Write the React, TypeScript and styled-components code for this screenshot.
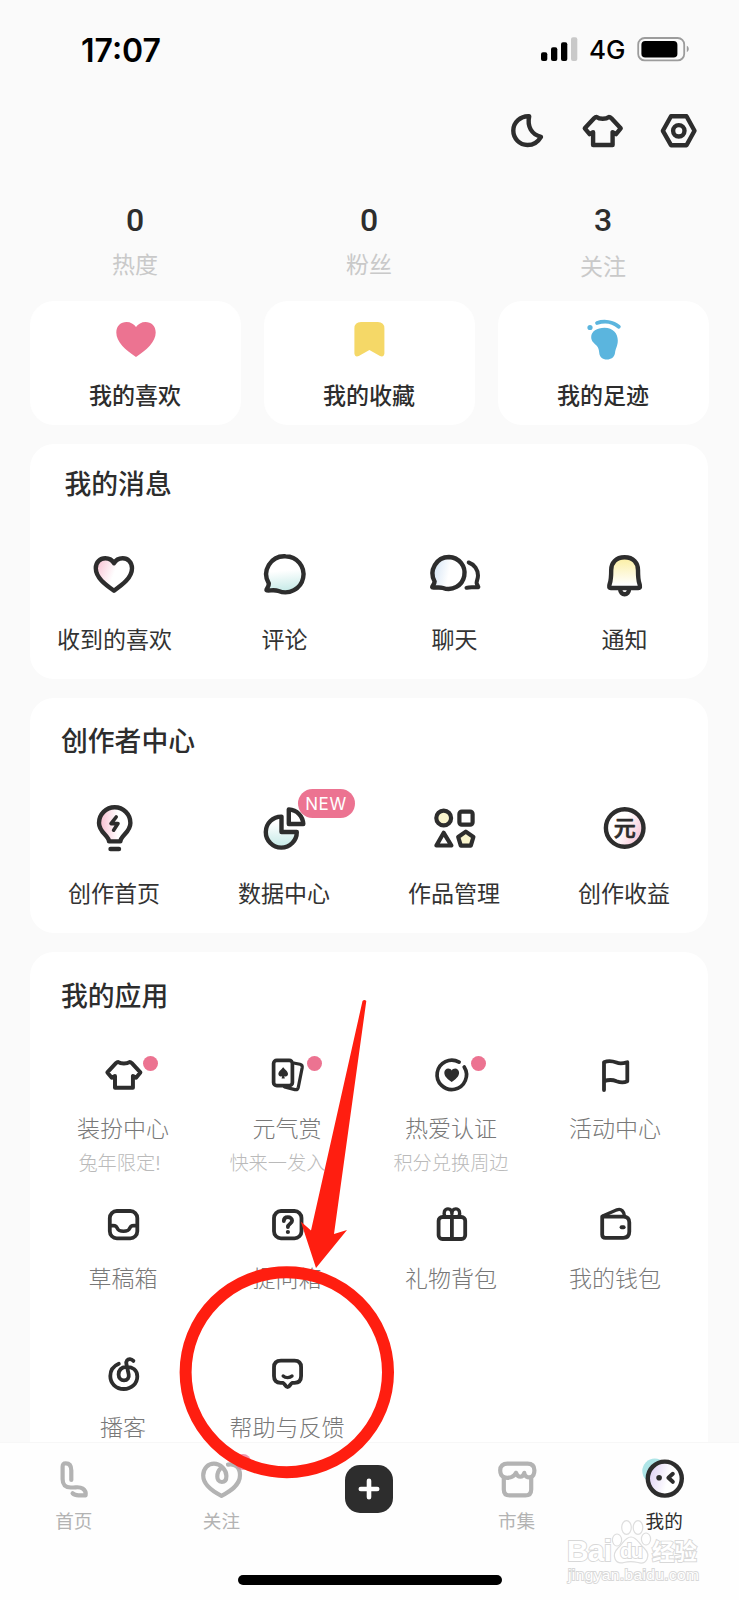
import React from 'react';
import styled, { createGlobalStyle } from 'styled-components';

const INK = '#2d2d2d';
const PINK = '#ec7391';
const MUTED = '#b3b3b3';

const GlobalStyle = createGlobalStyle`
  *, *::before, *::after { box-sizing: border-box; }
  body {
    margin: 0;
    background: #fafafa;
    font-family: Inter, "Noto Sans CJK SC", sans-serif;
    color: ${INK};
  }
  svg { display: block; overflow: visible; flex: none; }
`;

const Screen = styled.div`
  position: relative;
  width: 739px;
  height: 1600px;
  display: flex;
  flex-direction: column;
  overflow: hidden;
  background: #fafafa;
`;

const Content = styled.main`
  flex: 1;
  min-height: 0;
  overflow: hidden;
  display: flex;
  flex-direction: column;
`;

const StatusBar = styled.header`
  height: 98px;
  flex: none;
  padding: 0 50px 0 81px;
  display: flex;
  align-items: center;
  justify-content: space-between;
`;

const Clock = styled.span`
  margin-top: 3px;
  font-size: 32px;
  font-weight: 600;
  letter-spacing: 0;
  line-height: 40px;
  color: #000;
`;

const StatusIcons = styled.div`
  display: flex;
  align-items: center;
`;

const Network = styled.span`
  margin: 2px 13px 0 11px;
  width: 35px;
  font-size: 26px;
  font-weight: 500;
  line-height: 30px;
  color: #000;
`;

const Toolbar = styled.div`
  height: 57px;
  flex: none;
  padding: 9px 37px 0 0;
  display: flex;
  justify-content: flex-end;
  gap: 28px;
`;

const Stats = styled.section`
  display: grid;
  grid-template-columns: repeat(3, 211px);
  column-gap: 23px;
  height: 146px;
  flex: none;
  padding: 47px 0 0 29.5px;
`;

const Stat = styled.div`
  display: flex;
  flex-direction: column;
  align-items: center;
`;

const StatValue = styled.strong`
  font-family: Roboto, sans-serif;
  font-size: 32px;
  font-weight: 500;
  line-height: 36px;
`;

const StatLabel = styled.span<{ $drop?: number }>`
  margin-top: ${p => 12 + (p.$drop ?? 0)}px;
  font-size: 23px;
  line-height: 30px;
  color: #c9c9c9;
`;

const Shortcuts = styled.section`
  display: grid;
  grid-template-columns: repeat(3, 211px);
  column-gap: 23px;
  padding-left: 30px;
  flex: none;
`;

const Shortcut = styled.div`
  height: 124px;
  padding: 14px 1px 0 0;
  border-radius: 24px;
  background: #fff;
  display: flex;
  flex-direction: column;
  align-items: center;
`;

const ShortcutLabel = styled.span`
  margin-top: 17px;
  font-size: 23px;
  font-weight: 500;
  line-height: 32px;
`;

const Panel = styled.section<{ $height: number }>`
  margin: 19px 30px 0;
  width: 678px;
  height: ${p => p.$height}px;
  flex: none;
  border-radius: 24px;
  background: #fff;
`;

const PanelTitle = styled.h2<{ $indent: number; $top: number }>`
  margin: 0;
  padding: ${p => p.$top}px 0 0 ${p => p.$indent}px;
  font-size: 26.8px;
  font-weight: 500;
  line-height: 38px;
`;

const FourUp = styled.div<{ $top: number }>`
  display: grid;
  grid-template-columns: repeat(4, 170px);
  margin: ${p => p.$top}px 0 0 -1px;
`;

const Entry = styled.div`
  display: flex;
  flex-direction: column;
  align-items: center;
`;

const EntryLabel = styled.span<{ $gap: number; $shift?: number }>`
  margin-top: ${p => p.$gap}px;
  padding-left: ${p => p.$shift ?? 0}px;
  font-size: 23px;
  line-height: 32px;
  white-space: nowrap;
  color: #333;
`;

const IconSlot = styled.div`
  position: relative;
`;

const NewBadge = styled.span`
  position: absolute;
  left: 37.5px;
  top: -15px;
  width: 57px;
  height: 29px;
  border-radius: 15px;
  background: ${PINK};
  color: #fff;
  font-size: 17px;
  letter-spacing: 0.6px;
  line-height: 30px;
  text-align: center;
`;

const AppGrid = styled.div`
  display: grid;
  grid-template-columns: repeat(4, 164px);
  grid-auto-rows: 149.5px;
  margin: 40px 0 0 11px;
`;

const AppLabel = styled.span`
  margin-top: 18px;
  font-size: 23px;
  font-weight: 300;
  line-height: 32px;
  color: #787878;
  white-space: nowrap;
`;

const AppNote = styled.span<{ $trail?: number }>`
  margin-top: 4px;
  padding-right: ${p => p.$trail ?? 0}px;
  font-size: 19.2px;
  font-weight: 300;
  line-height: 28px;
  color: #bababa;
  white-space: nowrap;
`;

const Dot = styled.i`
  position: absolute;
  left: 40px;
  top: 1px;
  width: 15px;
  height: 15px;
  border-radius: 50%;
  background: ${PINK};
`;

const TabBar = styled.nav`
  height: 158px;
  flex: none;
  background: #fefefe;
  border-top: 1px solid #f7f7f7;
  display: flex;
  flex-direction: column;
  justify-content: space-between;
  align-items: center;
  padding: 12px 0 15px;
`;

const Tabs = styled.div`
  display: grid;
  grid-template-columns: repeat(5, 1fr);
  width: 100%;
  padding-right: 1px;
`;

const Tab = styled.div<{ $active?: boolean }>`
  display: flex;
  flex-direction: column;
  align-items: center;
  font-size: 18.6px;
  line-height: 26px;
  color: ${p => (p.$active ? INK : MUTED)};
`;

const TabLabel = styled.span`
  margin-top: 5px;
`;

const Plus = styled.div`
  width: 48px;
  height: 48px;
  margin-top: 10px;
  border-radius: 15px;
  background: ${INK};
`;

const FollowDot = styled(Dot)`
  left: 38px;
  top: -1px;
  width: 16px;
  height: 16px;
  opacity: 0.75;
`;

const HomeIndicator = styled.div`
  width: 264px;
  height: 10px;
  border-radius: 5px;
  background: #000;
`;

const Annotation = styled.svg`
  position: absolute;
  left: 0;
  top: 0;
  pointer-events: none;
`;

type IconProps = { size?: number; sw?: number; color?: string; children: React.ReactNode };

const Icon = ({ size = 48, sw = 4.4, color = INK, children }: IconProps) => (
  <svg
    width={size}
    height={size}
    viewBox={`0 0 ${size} ${size}`}
    fill="none"
    stroke={color}
    strokeWidth={sw}
    strokeLinecap="round"
    strokeLinejoin="round"
  >
    {children}
  </svg>
);

type FadeProps = { id: string; from: string; x1?: string; y1?: string; x2?: string; y2?: string; end?: string };

const Fade = ({ id, from, x1 = '0', y1 = '0', x2 = '1', y2 = '0', end = '60%' }: FadeProps) => (
  <defs>
    <linearGradient id={id} x1={x1} y1={y1} x2={x2} y2={y2}>
      <stop offset="0" stopColor={from} />
      <stop offset={end} stopColor="#fff" />
    </linearGradient>
  </defs>
);

const SHIRT = 'M18.6 10 C21.5 12.3 28 12.3 30.9 10 C32 10 32.6 10.4 33.4 11.2 L42.7 21.3 L38 27.2 L34.6 25.2 V38 H15.1 V25.2 L11.6 27.2 L6.8 21.3 L16.1 11.2 C16.9 10.4 17.5 10 18.6 10Z';

const Moon = () => (
  <Icon><path d="M27.2 9.3 C25 19.5 29.5 27.5 39 29.8 C36 35 31.5 38 25.5 38 C17.5 38 11.3 31.5 11.3 23.6 C11.3 15.5 18.5 8.8 27.2 9.3Z" /></Icon>
);
const Shirt = () => <Icon><path d={SHIRT} /></Icon>;
const Settings = () => (
  <Icon>
    <path d="M17 9.3 H32.5 L40.5 23.8 L32.5 38.2 H17 L8.9 23.8Z" />
    <circle cx="24.8" cy="23.8" r="5.7" />
  </Icon>
);

const HeartSolid = () => (
  <Icon><path stroke="none" fill={PINK} d="M25 42 C14.5 35 5.3 27 5.3 17.5 C5.3 11 9.8 7 15.5 7 C19.5 7 23 9 25 12 C27 9 30.5 7 34.5 7 C40.2 7 44.7 11 44.7 17.5 C44.7 27 35.5 35 25 42Z" /></Icon>
);
const BookmarkSolid = () => (
  <Icon><path stroke="none" fill="#f5d867" d="M16 7 H32.8 Q39.4 7 39.4 13.5 V38.5 Q38.8 42.5 35 41 L24.4 35 L13.8 41 Q10 42.5 9.4 38.5 V13.5 Q9.4 7 16 7Z" /></Icon>
);
const Foot = () => (
  <Icon color="#5bb5de" sw={3.8}>
    <path stroke="none" fill="#5bb5de" d="M25.5 12.8 C34 12.8 38.8 18.5 38.8 25.5 C38.8 31 36.6 33 36 38 C35.4 42.4 32 44.5 28 44.5 C23.4 44.5 20.6 42.2 20.2 37.5 C19.9 34.5 19.4 32.5 17.5 30.5 C14.5 27.6 12.2 26 12.2 22 C12.2 16.5 18 12.8 25.5 12.8Z" />
    <path d="M18 8 C25.5 5.5 34 6.8 39.8 11.8" />
    <circle cx="11" cy="12.5" r="2.6" stroke="none" fill="#5bb5de" />
  </Icon>
);

const HeartLine = () => (
  <Icon>
    <Fade id="pinkFade" from="#f8bccf" y2="0.35" />
    <path fill="url(#pinkFade)" d="M24 39.7 C16 34 5.8 27 5.8 17.3 C5.8 11 10.3 7.3 15.3 7.3 C19.3 7.3 22.5 9.5 24 12.3 C25.5 9.5 28.7 7.3 32.7 7.3 C37.7 7.3 42 11 42 17.3 C42 27 32 34 24 39.7Z" />
  </Icon>
);
const Comment = () => (
  <Icon>
    <Fade id="tealFade" from="#c3e9e6" x1="0.5" y1="1" x2="0.4" y2="0" />
    <path fill="url(#tealFade)" d="M25.5 5.3 A18.2 18 0 1 1 18.5 40 C14 38.3 10.5 39.8 7 39.4 C5.2 38.9 9 36.5 8.8 32.5 A18.2 18 0 0 1 25.5 5.3Z" />
  </Icon>
);
const Chat = () => (
  <Icon>
    <Fade id="blueFade" from="#cfe1f3" y2="0.2" />
    <path fill="url(#blueFade)" d="M19 6 A16 16 0 1 1 13 37 C9.5 35.8 6 37 2.6 36.4 C1.2 35.8 4.6 33.5 4.6 30.5 A16.5 16.5 0 0 1 19 6Z" />
    <path strokeWidth="4" d="M38.7 11.5 C44.5 13.5 48 19 48 24.5 C48 28 46.6 29.5 46.6 32 C46.8 34 49 35.3 48.2 36.3 C44.5 36.5 40 35.6 36.5 36.8" />
  </Icon>
);
const Bell = () => (
  <Icon>
    <Fade id="yellowFade" from="#fbeea0" x2="0" y2="1" end="90%" />
    <path d="M20.3 39 a4.3 4.3 0 0 0 8.6 0" />
    <path fill="url(#yellowFade)" d="M24.6 6.3 C15.8 6.3 11.2 12 11.2 19 C11.2 26 11.2 28.5 9.8 32.5 C8.8 35.6 9 37 11 37 H38.2 C40.2 37 40.4 35.6 39.4 32.5 C38 28.5 38 26 38 19 C38 12 33.4 6.3 24.6 6.3Z" />
  </Icon>
);

const Bulb = () => (
  <Icon>
    <Fade id="bulbFade" from="#f6b9cd" />
    <path fill="url(#bulbFade)" d="M19 37.4 C18.8 31.5 9 28.5 9 19 A15.7 15.7 0 0 1 40.4 19 C40.4 28.5 30.6 31.5 30.4 37.4Z" />
    <path strokeWidth="3.6" d="M26.2 13 L21 19.6 H28 L23.6 26.2" />
    <path d="M20.5 45 H29" />
  </Icon>
);
const Pie = () => (
  <Icon>
    <Fade id="pieFade" from="#c3e9e6" x1="0.5" y1="1" x2="0.5" y2="0" end="80%" />
    <path fill="url(#pieFade)" d="M21.5 12.6 V28 H36.8 A15.5 15.5 0 1 1 21.5 12.6Z" />
    <path d="M28.8 5.4 V20 H43.3 C42.8 12 37 6 28.8 5.4Z" />
  </Icon>
);
const Shapes = () => (
  <Icon sw={4.2}>
    <circle cx="13.7" cy="14" r="7.4" fill="#faf5cd" />
    <rect x="29.4" y="7.6" width="13.2" height="13" rx="2.4" />
    <path d="M13.7 28.8 L21.4 41.5 H6.4Z" />
    <path fill="#faf5cd" d="M35.8 27.6 L43.4 33 L40.8 41.6 H30.8 L28.2 33Z" />
  </Icon>
);
const YuanText = styled.text`
  font-family: "Noto Sans CJK SC", sans-serif;
  font-size: 22px;
  font-weight: 500;
  text-anchor: middle;
`;
const Yuan = () => (
  <Icon>
    <Fade id="yuanFade" from="#f6bccf" x1="1" y1="0.8" x2="0" y2="0.3" />
    <circle cx="24.7" cy="24" r="18.8" fill="url(#yuanFade)" />
    <YuanText x="24.7" y="32.3" fill={INK} stroke={INK} strokeWidth="0.7">元</YuanText>
  </Icon>
);

const AppShirt = () => (
  <Icon size={40} sw={4}><path strokeWidth="4.3" transform="translate(-1.9 -2.2) scale(0.92)" d={SHIRT} /></Icon>
);
const Cards = () => (
  <Icon size={40} sw={3.7}>
    <rect x="6.6" y="5.4" width="18.8" height="25.3" rx="3.2" />
    <path strokeWidth="3.2" d="M27.8 8.2 L33 9.3 Q35.6 10 35.2 12.6 L31.3 32.3 Q30.7 35 28 34.6 L17.5 32" />
    <path stroke="none" fill={INK} d="M16.2 12.2 C18 14.5 21 16.3 21 19 C21 21.3 18.6 22 17.2 20.9 L17.8 23.6 H14.6 L15.2 20.9 C13.8 22 11.4 21.3 11.4 19 C11.4 16.3 14.4 14.5 16.2 12.2Z" />
  </Icon>
);
const Passion = () => (
  <Icon size={40} sw={3.7}>
    <path d="M33.2 12 A14.7 14.7 0 1 1 28.1 7.1" />
    <path stroke="none" fill={INK} d="M20.7 27 C17 24.5 13.3 21.5 13.3 17.8 C13.3 15.2 15.2 13.6 17.2 13.6 C18.8 13.6 20 14.3 20.7 15.4 C21.4 14.3 22.6 13.6 24.2 13.6 C26.2 13.6 28.1 15.2 28.1 17.8 C28.1 21.5 24.4 24.5 20.7 27Z" />
  </Icon>
);
const Flag = () => (
  <Icon size={40}>
    <path strokeWidth="3.8" d="M9 35 V7.3 C13.5 5.3 18 6.2 21.5 7.6 C25.5 9.2 28.5 8.3 32.3 7.3 V26.3 C28.5 28 25 27.5 21.5 26.2 C17.5 24.6 13.5 24.5 9 26.3" />
  </Icon>
);
const Drafts = () => (
  <Icon size={40} sw={3.8}>
    <rect x="6.8" y="6" width="27.5" height="27.3" rx="7" />
    <path strokeWidth="3.6" d="M7 20.8 C11.5 20.3 12.8 20.6 14.3 23.2 C15.4 25.6 16.5 26.2 20.5 26.2 C24.5 26.2 25.6 25.6 26.7 23.2 C28.2 20.6 29.5 20.3 34 20.8" />
  </Icon>
);
const Question = () => (
  <Icon size={40} sw={3.8}>
    <rect x="7" y="6" width="27.5" height="27.3" rx="7" />
    <path d="M16.8 16 C16.8 13.2 18.6 12.2 20.9 12.2 C23.3 12.2 25.1 13.5 25.1 15.8 C25.1 18.8 20.9 18.8 20.9 22" />
    <circle cx="20.9" cy="27" r="2.1" stroke="none" fill={INK} />
  </Icon>
);
const Gift = () => (
  <Icon size={40} sw={3.8}>
    <rect x="7.6" y="12" width="26.6" height="22" rx="3.8" />
    <path d="M20.9 12 V34" />
    <path strokeWidth="3.4" d="M14 11.5 C12 8 13.5 3.9 17 3.9 C19.8 3.9 20.9 6 20.9 9 C20.9 6 22 3.9 24.8 3.9 C28.3 3.9 29.8 8 27.8 11.5" />
  </Icon>
);
const Wallet = () => (
  <Icon size={40} sw={3.8}>
    <path d="M7.2 11.6 H28.3 Q34.3 11.6 34.3 17.6 V26.5 Q34.3 32.8 28.3 32.8 H10.3 Q7.2 32.8 7.2 29.8Z" />
    <path strokeWidth="3.4" d="M7.6 11 L22 4.8 C26.3 3.2 29.3 6.5 29.6 11.5" />
    <path strokeWidth="4" d="M26.6 22.3 H28.6" />
  </Icon>
);
const Podcast = () => (
  <Icon size={40} sw={3.8}>
    <path d="M15.8 9.7 C10.5 12 7.3 16.5 7.3 22 C7.3 29.5 13 35 20.8 35 C28.5 35 34.3 29.5 34.3 22.5 C34.3 16 29.5 12.6 23.5 12.8 C18 13.2 15.6 16.5 15.6 20.5 C15.6 24 18 26.3 21 26.3 C24.5 26.3 26.3 23.5 25.7 20.5 L23.4 10 C22.8 7 24.5 5 27 5.2 C28.5 5.3 29.5 6 30.4 6.9" />
  </Icon>
);
const Feedback = () => (
  <Icon size={40} sw={3.8}>
    <path d="M14 6.7 H27.5 Q34.1 6.7 34.1 13.3 V22 Q34.1 28.8 27.5 28.8 H25.3 C23.6 29.2 22.6 33.2 20.6 33.2 C18.6 33.2 17.6 29.2 15.9 28.8 H13.7 Q7 28.8 7 22 V13.3 Q7 6.7 14 6.7Z" />
    <path strokeWidth="3.4" d="M16.2 22 C18.5 24.2 22.8 24.2 25 22" />
  </Icon>
);

const HomeIcon = () => (
  <Icon color={MUTED} sw={4.2}>
    <path d="M21.3 25 V15.5 C21.3 10.5 19 8.3 15.8 8.3 C13.3 8.3 12.6 9.5 12.6 12 V24 C12.6 30.2 15.2 32.3 20.8 32.5 C26 32.7 29.3 31.2 32.6 33.4 C35.7 35.5 36.2 37.4 35.6 40.4 H28.6 C26 40.4 24 39.8 22.6 38.3" />
  </Icon>
);
const FollowIcon = () => (
  <Icon color={MUTED} sw={4.2}>
    <path d="M31 9.6 C38 8.2 43 12.5 43 20 C43 30.5 33 36.5 24.5 40.8 C16 36.5 6.2 30.5 6.2 20.5 C6.2 12.8 11.5 8.6 17 8.6 C23.5 8.6 29.4 15 29.4 21 C29.4 25 27.5 27 24.8 27 C21.7 27 20.3 24.5 20.3 21.5 C20.3 18 21.8 15 24 13" />
  </Icon>
);
const MarketIcon = () => (
  <Icon color={MUTED} sw={4.2}>
    <path d="M10.8 22.2 C8 20.8 7.2 17.8 7.2 15.3 C7.2 10.8 9.9 8.6 14.5 8.6 H34.4 C39 8.6 41.4 10.8 41.4 15.3 C41.4 17.8 40.8 20.8 38.2 22.2 C34 23 31.5 20.8 31.3 17.8 C29.8 22.8 25 23.3 23 17.8 C21.5 21.8 16 23.8 10.8 22.2Z" />
    <path d="M10.8 22 V34.4 Q10.8 40.4 16.8 40.4 H32.2 Q38.2 40.4 38.2 34.4 V22" />
  </Icon>
);
const MeIcon = () => (
  <Icon>
    <Fade id="meFade" from="#d9c8f3" y2="0.3" end="70%" />
    <circle cx="14.8" cy="16" r="12.5" fill="#aee5e7" stroke="none" />
    <circle cx="24.8" cy="23.6" r="17" fill="url(#meFade)" />
    <circle cx="19.1" cy="22.8" r="2.8" fill={INK} stroke="none" />
    <path strokeWidth="4" d="M32.8 18.8 L28.4 22.8 L32.8 26.8" />
  </Icon>
);

const shortcuts = [
  { label: '我的喜欢', icon: <HeartSolid /> },
  { label: '我的收藏', icon: <BookmarkSolid /> },
  { label: '我的足迹', icon: <Foot /> },
];

const messages = [
  { label: '收到的喜欢', icon: <HeartLine /> },
  { label: '评论', icon: <Comment /> },
  { label: '聊天', icon: <Chat /> },
  { label: '通知', icon: <Bell /> },
];

const creator = [
  { label: '创作首页', icon: <Bulb /> },
  { label: '数据中心', icon: <Pie />, isNew: true },
  { label: '作品管理', icon: <Shapes /> },
  { label: '创作收益', icon: <Yuan /> },
];

const apps = [
  { label: '装扮中心', icon: <AppShirt />, note: '兔年限定!', trail: 7, dot: true },
  { label: '元气赏', icon: <Cards />, note: '快来一发入...', trail: 3, dot: true },
  { label: '热爱认证', icon: <Passion />, note: '积分兑换周边', dot: true },
  { label: '活动中心', icon: <Flag /> },
  { label: '草稿箱', icon: <Drafts /> },
  { label: '提问箱', icon: <Question /> },
  { label: '礼物背包', icon: <Gift /> },
  { label: '我的钱包', icon: <Wallet /> },
  { label: '播客', icon: <Podcast /> },
  { label: '帮助与反馈', icon: <Feedback /> },
];

const Watermark = styled.div`
  position: absolute;
  left: 566px;
  top: 1519px;
  width: 136px;
  height: 66px;
`;

const MarkText = styled.text<{ $size: number; $weight: number }>`
  font-family: "Liberation Sans", "Noto Sans CJK SC", sans-serif;
  font-size: ${p => p.$size}px;
  font-weight: ${p => p.$weight};
  fill: #fff;
  stroke: #d8d8d8;
  stroke-width: 1.8px;
  paint-order: stroke;
`;

const BaiduMark = () => (
  <Watermark>
    <svg width="136" height="66" viewBox="0 0 136 66">
      <MarkText $size={30} $weight={700} x="1" y="42" textLength="45">Bai</MarkText>
      <g fill="#fff" stroke="#dedede" strokeWidth="1.2">
        <ellipse cx="51" cy="21" rx="4.6" ry="6" />
        <ellipse cx="60.5" cy="8.5" rx="4.8" ry="6.8" />
        <ellipse cx="72" cy="8.5" rx="4.8" ry="6.8" />
        <ellipse cx="80" cy="20" rx="4.6" ry="6" />
        <path d="M65 18 C71 18 73 25 78 29 C86 37 80 46 72 43.5 C67 42.5 62 42.5 58 43.5 C49 46 45 36 52 29 C57 25 59 18 65 18Z" />
      </g>
      <MarkText $size={20} $weight={700} x="54" y="39" textLength="23">du</MarkText>
      <MarkText $size={22.5} $weight={700} x="86" y="41">经验</MarkText>
      <MarkText $size={15.5} $weight={400} x="2" y="61" textLength="131">jingyan.baidu.com</MarkText>
    </svg>
  </Watermark>
);

export default function App() {
  return (
    <>
      <GlobalStyle />
      <Screen>
        <Content>
          <StatusBar>
            <Clock>17:07</Clock>
            <StatusIcons>
              <svg width="37" height="24" viewBox="0 0 37 24">
                <rect x="0" y="15.2" width="6.3" height="8.8" rx="2" />
                <rect x="10" y="10.2" width="6.3" height="13.8" rx="2" />
                <rect x="20" y="5.2" width="6.3" height="18.8" rx="2" />
                <rect x="30" y="0.2" width="6.3" height="23.8" rx="2" fill="#c9c9c9" />
              </svg>
              <Network>4G</Network>
              <svg width="52" height="24" viewBox="0 0 52 24">
                <rect x="1.2" y="1" width="46" height="22.4" rx="6.5" fill="none" stroke="#9c9c9c" strokeWidth="1.8" />
                <rect x="4.4" y="4" width="36" height="16.6" rx="3.8" />
                <path d="M49.8 8.8 C52.4 10 52.4 14 49.8 15.2Z" fill="#9c9c9c" />
              </svg>
            </StatusIcons>
          </StatusBar>

          <Toolbar>
            <Moon />
            <Shirt />
            <Settings />
          </Toolbar>

          <Stats>
            <Stat><StatValue>0</StatValue><StatLabel>热度</StatLabel></Stat>
            <Stat><StatValue>0</StatValue><StatLabel>粉丝</StatLabel></Stat>
            <Stat><StatValue>3</StatValue><StatLabel $drop={2}>关注</StatLabel></Stat>
          </Stats>

          <Shortcuts>
            {shortcuts.map(s => (
              <Shortcut key={s.label}>
                {s.icon}
                <ShortcutLabel>{s.label}</ShortcutLabel>
              </Shortcut>
            ))}
          </Shortcuts>

          <Panel $height={235}>
            <PanelTitle $indent={34.5} $top={21}>我的消息</PanelTitle>
            <FourUp $top={48}>
              {messages.map(m => (
                <Entry key={m.label}>
                  {m.icon}
                  <EntryLabel $gap={25} $shift={1}>{m.label}</EntryLabel>
                </Entry>
              ))}
            </FourUp>
          </Panel>

          <Panel $height={235}>
            <PanelTitle $indent={31} $top={24}>创作者中心</PanelTitle>
            <FourUp $top={44}>
              {creator.map(c => (
                <Entry key={c.label}>
                  <IconSlot>
                    {c.icon}
                    {c.isNew && <NewBadge>NEW</NewBadge>}
                  </IconSlot>
                  <EntryLabel $gap={26}>{c.label}</EntryLabel>
                </Entry>
              ))}
            </FourUp>
          </Panel>

          <Panel $height={530}>
            <PanelTitle $indent={31} $top={25}>我的应用</PanelTitle>
            <AppGrid>
              {apps.map(a => (
                <Entry key={a.label}>
                  <IconSlot>
                    {a.icon}
                    {a.dot && <Dot />}
                  </IconSlot>
                  <AppLabel>{a.label}</AppLabel>
                  {a.note && <AppNote $trail={a.trail}>{a.note}</AppNote>}
                </Entry>
              ))}
            </AppGrid>
          </Panel>
        </Content>

        <TabBar>
          <Tabs>
            <Tab><HomeIcon /><TabLabel>首页</TabLabel></Tab>
            <Tab>
              <IconSlot><FollowIcon /><FollowDot /></IconSlot>
              <TabLabel>关注</TabLabel>
            </Tab>
            <Tab>
              <Plus>
                <Icon color="#fff" sw={4.6}><path d="M24 15.8 V32.2 M15.8 24 H32.2" /></Icon>
              </Plus>
            </Tab>
            <Tab><MarketIcon /><TabLabel>市集</TabLabel></Tab>
            <Tab $active><MeIcon /><TabLabel>我的</TabLabel></Tab>
          </Tabs>
          <HomeIndicator />
        </TabBar>

        <BaiduMark />
        <Annotation width="739" height="1600" viewBox="0 0 739 1600">
          <ellipse cx="286.8" cy="1372.2" rx="101.2" ry="100" fill="none" stroke="#ff1e10" strokeWidth="12" />
          <path fill="#ff1e10" d="M362.5 1001 Q364.5 999 366.3 1001 L334 1234 L347 1230 L316 1268 L300.8 1221.5 L311 1230.5Z" />
        </Annotation>
      </Screen>
    </>
  );
}
